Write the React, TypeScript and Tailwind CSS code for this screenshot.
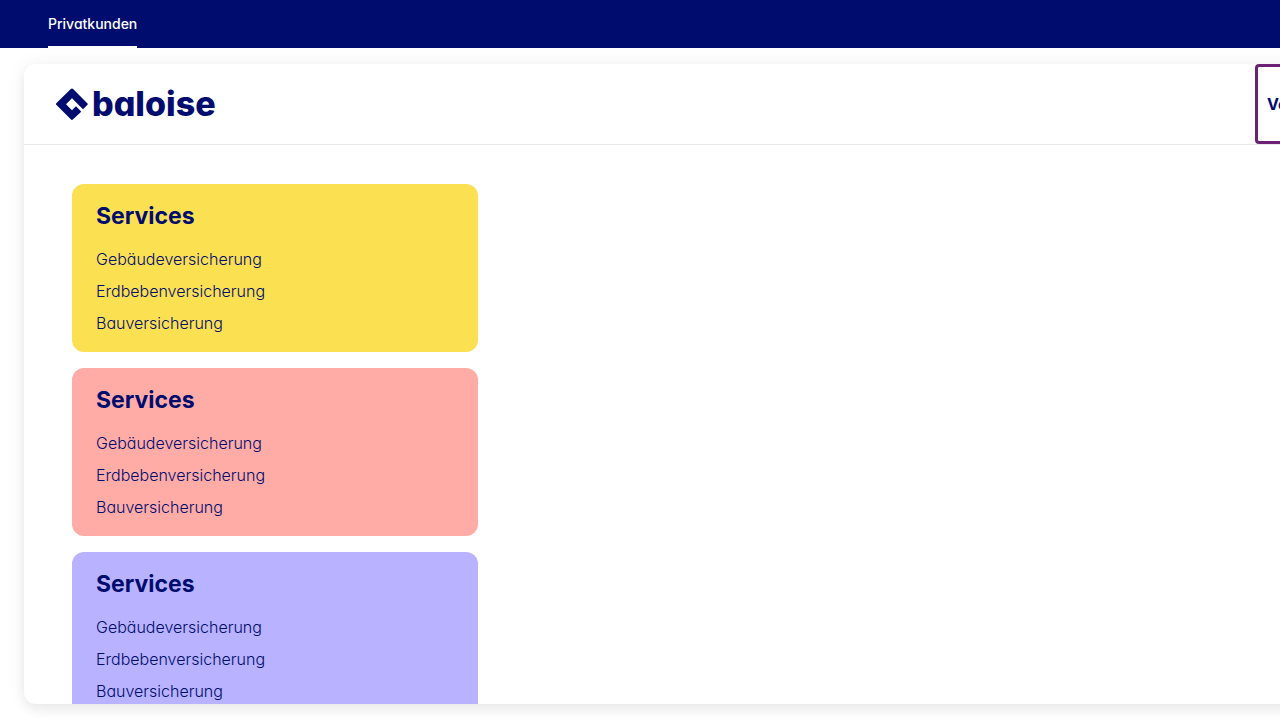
type Service = { title: string; color: string; links: string[] };

const links = ["Gebäudeversicherung", "Erdbebenversicherung", "Bauversicherung"];

const services: Service[] = [
  { title: "Services", color: "bg-[#fbe052]", links },
  { title: "Services", color: "bg-[#ffaca6]", links },
  { title: "Services", color: "bg-[#b8b2ff]", links },
];

function Logo() {
  return (
    <a href="#" className="flex items-center gap-1">
      <svg viewBox="0 0 32 32" className="size-8 shrink-0" fill="#000d6e" aria-hidden="true">
        <path d="M14.8 1a1.6 1.6 0 0 1 2.3 0L31.5 15.4a.9.9 0 0 1 0 1.3L27 21.2 16 10.2 10 16.2l6 6 4-4 4.7 4.7a.9.9 0 0 1 0 1.3L17.1 31.3a1.6 1.6 0 0 1-2.3 0L.5 17a1.4 1.4 0 0 1 0-2z" />
      </svg>
      <span className="text-[34px] leading-8 font-extrabold">baloise</span>
    </a>
  );
}

function ServiceCard({ title, color, links }: Service) {
  return (
    <section className={`rounded-xl px-6 pt-4 pb-[13px] ${color}`}>
      <h2 className="text-[23px] leading-8 font-bold">{title}</h2>
      <ul className="mt-[11px]">
        {links.map((label) => (
          <li key={label}>
            <a href="#" className="block text-base leading-8 font-[350]">
              {label}
            </a>
          </li>
        ))}
      </ul>
    </section>
  );
}

export default function App() {
  return (
    <div className="flex h-screen flex-col overflow-hidden bg-white font-[Inter,sans-serif] text-[#000d6e] [font-feature-settings:'cv11']">
      <nav className="flex h-12 shrink-0 bg-[#000d6e] px-12">
        <a
          href="#"
          className="flex items-center border-b-2 border-white pt-0.5 text-sm font-medium text-white"
        >
          Privatkunden
        </a>
      </nav>
      <main className="my-4 -mr-[90px] ml-6 flex min-h-0 flex-1 flex-col overflow-hidden rounded-xl bg-white shadow-[0_0_20px_rgba(0,0,0,0.06),0_6px_12px_rgba(0,0,0,0.06)]">
        <header className="flex h-[81px] shrink-0 items-start justify-between border-b border-[#e8e8e8] pr-2 pl-8">
          <div className="flex h-20 items-center">
            <Logo />
          </div>
          <button
            type="button"
            className="h-20 w-[107px] rounded-[4px] border-3 border-[#6c2273] px-[9px] text-left text-base font-bold"
          >
            Versichern
          </button>
        </header>
        <div className="grid grid-cols-3 gap-4 px-12 pt-[39px]">
          <div className="flex flex-col gap-4">
            {services.map((service) => (
              <ServiceCard key={service.color} {...service} />
            ))}
          </div>
        </div>
      </main>
    </div>
  );
}
